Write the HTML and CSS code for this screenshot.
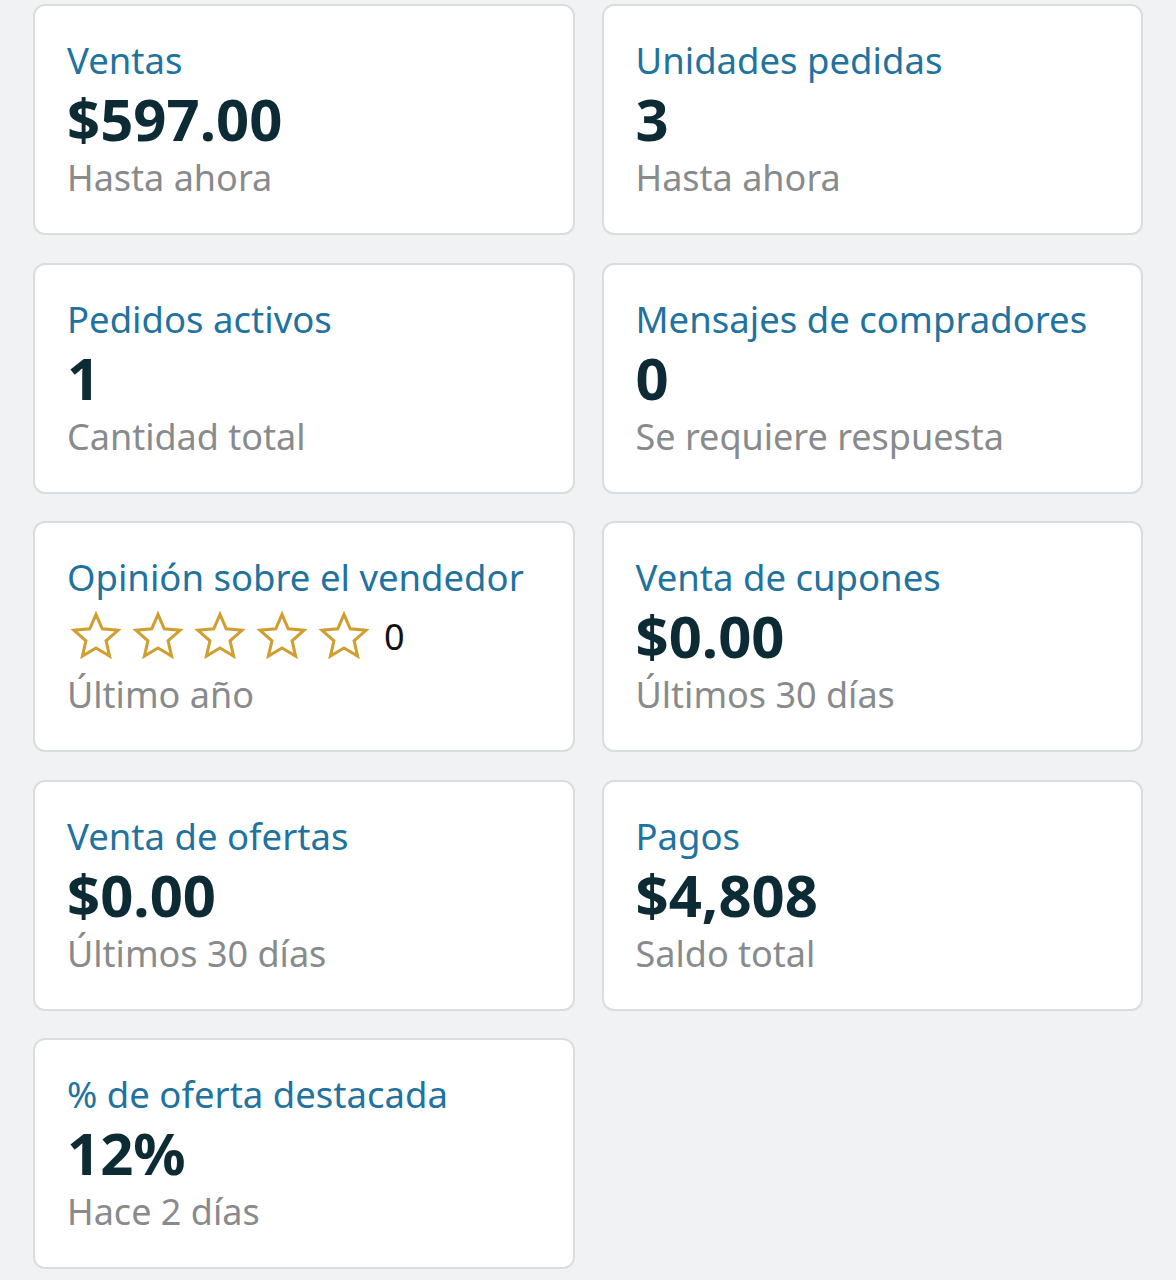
FILE: index.html
```html
<!DOCTYPE html>
<html lang="es">
<head>
    <meta charset="UTF-8">
    <meta name="viewport" content="width=device-width, initial-scale=1.0">
    <title>Resumen del vendedor</title>
    <link rel="stylesheet" href="styles.css">
</head>
<body>
    <div class="cards">
        <div class="card">
            <div class="card-title">Ventas</div>
            <div class="card-value">$597.00</div>
            <div class="card-note">Hasta ahora</div>
        </div>
        <div class="card">
            <div class="card-title">Unidades pedidas</div>
            <div class="card-value">3</div>
            <div class="card-note">Hasta ahora</div>
        </div>
        <div class="card">
            <div class="card-title">Pedidos activos</div>
            <div class="card-value">1</div>
            <div class="card-note">Cantidad total</div>
        </div>
        <div class="card">
            <div class="card-title">Mensajes de compradores</div>
            <div class="card-value">0</div>
            <div class="card-note">Se requiere respuesta</div>
        </div>
        <div class="card">
            <div class="card-title">Opinión sobre el vendedor</div>
            <div class="rating">
                <svg class="star" viewBox="-2 -2 54 54"><path d="M25 2.5 L31.47 17.6 L47.83 19.08 L35.46 29.9 L39.11 45.92 L25 37.5 L10.89 45.92 L14.54 29.9 L2.17 19.08 L18.53 17.6 Z"/></svg>
                <svg class="star" viewBox="-2 -2 54 54"><path d="M25 2.5 L31.47 17.6 L47.83 19.08 L35.46 29.9 L39.11 45.92 L25 37.5 L10.89 45.92 L14.54 29.9 L2.17 19.08 L18.53 17.6 Z"/></svg>
                <svg class="star" viewBox="-2 -2 54 54"><path d="M25 2.5 L31.47 17.6 L47.83 19.08 L35.46 29.9 L39.11 45.92 L25 37.5 L10.89 45.92 L14.54 29.9 L2.17 19.08 L18.53 17.6 Z"/></svg>
                <svg class="star" viewBox="-2 -2 54 54"><path d="M25 2.5 L31.47 17.6 L47.83 19.08 L35.46 29.9 L39.11 45.92 L25 37.5 L10.89 45.92 L14.54 29.9 L2.17 19.08 L18.53 17.6 Z"/></svg>
                <svg class="star" viewBox="-2 -2 54 54"><path d="M25 2.5 L31.47 17.6 L47.83 19.08 L35.46 29.9 L39.11 45.92 L25 37.5 L10.89 45.92 L14.54 29.9 L2.17 19.08 L18.53 17.6 Z"/></svg>
                <span class="rating-count">0</span>
            </div>
            <div class="card-note">Último año</div>
        </div>
        <div class="card">
            <div class="card-title">Venta de cupones</div>
            <div class="card-value">$0.00</div>
            <div class="card-note">Últimos 30 días</div>
        </div>
        <div class="card">
            <div class="card-title">Venta de ofertas</div>
            <div class="card-value">$0.00</div>
            <div class="card-note">Últimos 30 días</div>
        </div>
        <div class="card">
            <div class="card-title">Pagos</div>
            <div class="card-value">$4,808</div>
            <div class="card-note">Saldo total</div>
        </div>
        <div class="card">
            <div class="card-title">% de oferta destacada</div>
            <div class="card-value">12%</div>
            <div class="card-note">Hace 2 días</div>
        </div>
    </div>
</body>
</html>
```

FILE: styles.css
```css
body {
    font-family: "Noto Sans", "Open Sans", sans-serif;
    background-color: #f1f2f4;
    margin: 0;
    padding: 4px 33px 12px 33px;
}

.cards {
    display: grid;
    grid-template-columns: 1fr 1fr;
    column-gap: 27px;
    row-gap: 27.5px;
}

.card {
    background-color: #fff;
    border: 2px solid #dadde0;
    border-radius: 12px;
    padding: 31px 32px 30px 32px;
    height: 231px;
    box-sizing: border-box;
}

.card-title {
    font-size: 36.5px;
    line-height: 47px;
    color: #22729f;
    white-space: nowrap;
}

.card-value {
    font-size: 58px;
    line-height: 70px;
    font-weight: bold;
    color: #0c2b34;
}

.card-note {
    font-size: 36px;
    line-height: 48px;
    color: #888a8c;
}

.rating {
    display: flex;
    align-items: center;
    height: 70px;
    gap: 10px;
    padding-left: 3px;
}

.star {
    width: 52px;
    height: 52px;
    fill: none;
    stroke: #cf9f32;
    stroke-width: 3.2;
    stroke-linejoin: miter;
}

.rating-count {
    font-size: 36px;
    color: #111;
    margin-left: 4px;
}
```
